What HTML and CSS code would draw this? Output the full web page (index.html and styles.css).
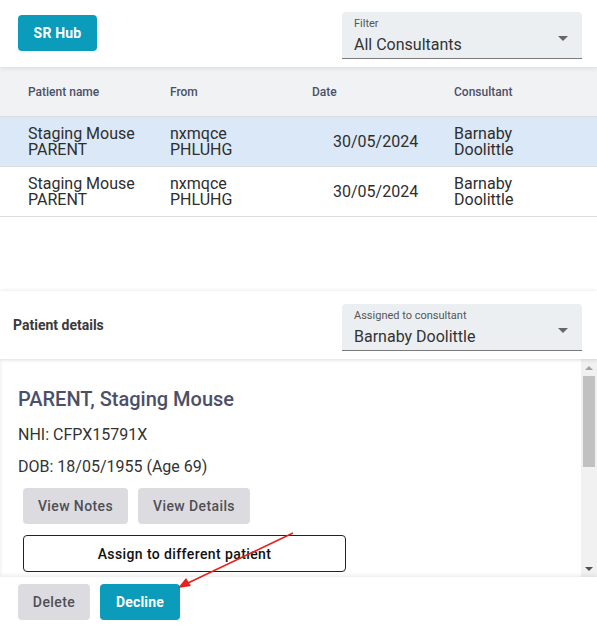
FILE: index.html
```html
<!DOCTYPE html>
<html>
<head>
<meta charset="utf-8">
<link rel="stylesheet" href="styles.css">
</head>
<body>
<div class="page">
  <header class="topbar">
    <button class="btn btn-primary hub">SR Hub</button>
    <div class="select">
      <div class="select-label">Filter</div>
      <div class="select-value">All Consultants</div>
      <span class="caret"></span>
    </div>
  </header>

  <section class="table">
    <div class="trow thead">
      <div class="cell">Patient name</div>
      <div class="cell">From</div>
      <div class="cell">Date</div>
      <div class="cell">Consultant</div>
    </div>
    <div class="trow tbody selected">
      <div class="cell">Staging Mouse<br>PARENT</div>
      <div class="cell">nxmqce<br>PHLUHG</div>
      <div class="cell date">30/05/2024</div>
      <div class="cell">Barnaby<br>Doolittle</div>
    </div>
    <div class="trow tbody">
      <div class="cell">Staging Mouse<br>PARENT</div>
      <div class="cell">nxmqce<br>PHLUHG</div>
      <div class="cell date">30/05/2024</div>
      <div class="cell">Barnaby<br>Doolittle</div>
    </div>
  </section>

  <section class="details-bar">
    <div class="details-title">Patient details</div>
    <div class="select">
      <div class="select-label">Assigned to consultant</div>
      <div class="select-value">Barnaby Doolittle</div>
      <span class="caret"></span>
    </div>
  </section>

  <section class="details">
    <div class="details-content">
      <h2 class="patient-name">PARENT, Staging Mouse</h2>
      <p class="info">NHI: CFPX15791X</p>
      <p class="info">DOB: 18/05/1955 (Age 69)</p>
      <div class="btn-row">
        <button class="btn btn-grey notes">View Notes</button>
        <button class="btn btn-grey vdetails">View Details</button>
      </div>
      <button class="btn btn-outline">Assign to different patient</button>
    </div>
    <div class="scrollbar">
      <span class="sb-up"></span>
      <div class="sb-track"><div class="sb-thumb"></div></div>
      <span class="sb-down"></span>
    </div>
  </section>

  <footer class="footer">
    <button class="btn btn-grey delete">Delete</button>
    <button class="btn btn-primary decline">Decline</button>
  </footer>

  <svg class="annot" width="597" height="626" viewBox="0 0 597 626">
    <line x1="293" y1="533" x2="188" y2="583" stroke="#e5221c" stroke-width="1.6"/>
    <polygon points="178,588 186,578 191,586" fill="#e5221c"/>
  </svg>
</div>
</body>
</html>
```

FILE: styles.css
```css
* { box-sizing: border-box; }
html, body { margin: 0; padding: 0; background: #fff; }
body {
  font-family: Roboto, "Liberation Sans", sans-serif;
  color: #2f2f2f;
}
.page {
  position: relative;
  width: 597px;
  height: 626px;
  display: flex;
  flex-direction: column;
  overflow: hidden;
}

/* buttons */
.btn {
  font-family: Roboto, "Liberation Sans", sans-serif;
  font-size: 14px;
  font-weight: 500;
  letter-spacing: 0.4px;
  border: none;
  border-radius: 4px;
  height: 36px;
  padding: 0;
  cursor: pointer;
}
.btn-primary {
  background: #0b9bbb;
  color: #fff;
  font-weight: 700;
  letter-spacing: 0.2px;
}
.btn-grey {
  background: #dcdce0;
  color: #4f4f55;
}
.btn-outline {
  background: #fff;
  color: #111;
  border: 1px solid #222;
  width: 323px;
  height: 37px;
  margin: 11px 0 0 5px;
}

/* top bar */
.topbar {
  height: 67px;
  flex: none;
  display: flex;
  justify-content: space-between;
  align-items: flex-start;
  padding: 12px 15px 0 18px;
  position: relative;
  z-index: 2;
  box-shadow: 0 2px 4px rgba(0,0,0,0.08);
  background: #fff;
}
.hub { width: 79px; margin-top: 3px; }

.select {
  position: relative;
  width: 240px;
  height: 47px;
  background: #eceff2;
  border-bottom: 1px solid #7a7a7a;
  border-radius: 4px 4px 0 0;
  padding: 5px 12px 0 12px;
}
.select-label {
  font-size: 11px;
  color: #555;
  line-height: 13px;
}
.select-value {
  font-size: 16px;
  color: #333;
  line-height: 22px;
  margin-top: 4px;
}
.caret {
  position: absolute;
  right: 14px;
  top: 24px;
  width: 0;
  height: 0;
  border-left: 5px solid transparent;
  border-right: 5px solid transparent;
  border-top: 5px solid #666;
}

/* table */
.table {
  flex: 1;
  background: #fff;
}
.trow {
  display: grid;
  grid-template-columns: 142px 142px 142px 142px;
  padding-left: 28px;
  align-items: center;
  border-bottom: 1px solid #dcdcde;
}
.thead {
  height: 50px;
  background: #f1f2f4;
  font-size: 12px;
  font-weight: 500;
  color: #4b5068;
}
.tbody {
  height: 50px;
  font-size: 16px;
  line-height: 16px;
  color: #2e2e2e;
}
.selected { background: #dbe8f7; }
.date { padding-left: 21px; }

/* details header */
.details-bar {
  flex: none;
  height: 68px;
  display: flex;
  justify-content: space-between;
  align-items: flex-start;
  padding: 13px 15px 0 13px;
  background: #fff;
  position: relative;
  z-index: 2;
  box-shadow: 0 -1px 3px rgba(0,0,0,0.08), 0 2px 3px rgba(0,0,0,0.08);
}
.details-title {
  font-size: 14px;
  font-weight: 700;
  color: #3a3a3a;
  margin-top: 13px;
}

/* details */
.details {
  flex: none;
  height: 218px;
  display: flex;
  background: #fff;
  box-shadow: inset 2px 0 2px rgba(0,0,0,0.04);
}
.details-content {
  flex: 1;
  padding: 28px 0 0 18px;
  overflow: hidden;
}
.patient-name {
  margin: 0;
  font-size: 20px;
  font-weight: 500;
  line-height: 24px;
  color: #4b5068;
}
.info {
  margin: 12px 0 0 0;
  font-size: 16px;
  line-height: 24px;
  color: #333;
}
.info + .info { margin-top: 8px; }
.btn-row {
  display: flex;
  gap: 10px;
  margin: 9px 0 0 5px;
}
.notes { width: 105px; }
.vdetails { width: 112px; }

.scrollbar {
  flex: none;
  width: 16px;
  background: #f1f1f1;
  display: flex;
  flex-direction: column;
  align-items: center;
}
.sb-up, .sb-down {
  flex: none;
  height: 17px;
  width: 100%;
  display: flex;
  justify-content: center;
  align-items: center;
}
.sb-up::before {
  content: "";
  border-left: 4px solid transparent;
  border-right: 4px solid transparent;
  border-bottom: 4px solid #a3a3a3;
}
.sb-down::before {
  content: "";
  border-left: 4px solid transparent;
  border-right: 4px solid transparent;
  border-top: 4px solid #505050;
}
.sb-track {
  flex: 1;
  width: 100%;
  padding: 0 2px;
}
.sb-thumb {
  height: 91px;
  background: #c1c1c1;
}

/* footer */
.footer {
  flex: none;
  height: 49px;
  display: flex;
  gap: 10px;
  padding: 7px 0 0 18px;
  background: #fff;
  position: relative;
  z-index: 2;
  box-shadow: 0 -2px 4px rgba(0,0,0,0.07);
}
.delete { width: 72px; }
.decline { width: 80px; }

.annot {
  position: absolute;
  left: 0;
  top: 0;
  pointer-events: none;
  z-index: 5;
}
```
